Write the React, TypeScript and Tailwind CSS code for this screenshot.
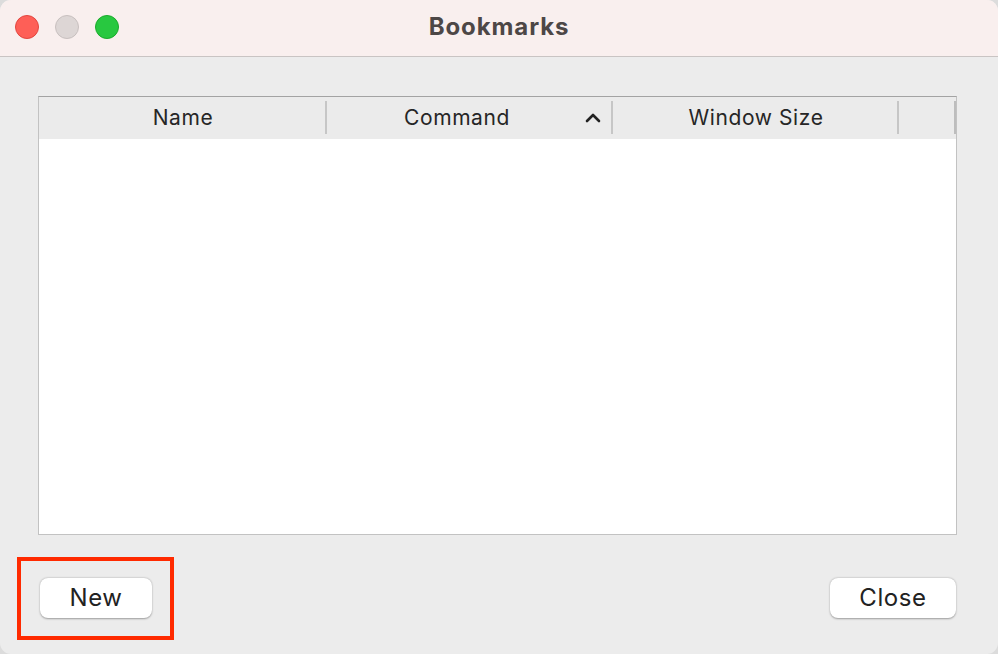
import { ChevronUp } from 'lucide-react';

const columns = [
  { label: 'Name', width: 'w-[288px]', sorted: false },
  { label: 'Command', width: 'w-[286px]', sorted: true },
  { label: 'Window Size', width: 'w-[286px]', sorted: false },
];

function Button({ label, className }: { label: string; className: string }) {
  return (
    <button
      className={`h-[40px] rounded-[8px] bg-white text-[24px] tracking-[0.6px] text-[#222] shadow-[0_0.5px_2px_rgba(0,0,0,0.35)] ${className}`}
    >
      {label}
    </button>
  );
}

export default function App() {
  return (
    <div className="w-[998px] h-[654px] bg-[#dcdcdc] font-['Inter','Liberation_Sans',sans-serif]">
      <div className="w-full h-full rounded-[11px] overflow-hidden flex flex-col bg-[#ececec]">
        {/* title bar */}
        <div className="relative h-[57px] shrink-0 bg-[#f9efee] border-b border-[#c9c4c3] flex items-center justify-center">
          <div className="absolute left-[15px] top-[15px] flex gap-[16px]">
            <span className="w-[24px] h-[24px] rounded-full bg-[#fe5f57] border border-[#e2463f]" />
            <span className="w-[24px] h-[24px] rounded-full bg-[#ddd6d5] border border-[#c8c0bf]" />
            <span className="w-[24px] h-[24px] rounded-full bg-[#28c840] border border-[#1aab2b]" />
          </div>
          <h1 className="-mt-[2px] text-[24px] font-bold text-[#4d4746] tracking-[0.9px]">Bookmarks</h1>
        </div>

        {/* body */}
        <div className="flex-1 flex flex-col pl-[38px] pr-[41px] pt-[39px]">
          <div className="h-[439px] flex flex-col border border-[#c2c2c2] border-t-[#a3a3a3] bg-white">
            <div className="h-[42px] shrink-0 flex bg-[#ebebeb]">
              {columns.map((c) => (
                <div
                  key={c.label}
                  className={`${c.width} relative flex items-center justify-center ${c.sorted ? 'pr-[26px]' : ''}`}
                >
                  <span className="text-[21px] tracking-[0.6px] text-[#262626]">{c.label}</span>
                  {c.sorted && (
                    <ChevronUp
                      className="absolute right-[8px] top-[9px] w-[24px] h-[24px] text-[#222]"
                      strokeWidth={2.6}
                    />
                  )}
                  <span className="absolute right-0 top-[4px] w-[2px] h-[33px] bg-[#c6c6c6]" />
                </div>
              ))}
              <div className="flex-1 relative">
                <span className="absolute right-0 top-[4px] w-[2px] h-[33px] bg-[#bdbdbd]" />
              </div>
            </div>
            <div className="flex-1 bg-white" />
          </div>

          <div className="flex items-start justify-between mt-[43px] pl-[2px] pr-[1px]">
            <div className="relative">
              <Button label="New" className="w-[112px]" />
              <span className="absolute -left-[23px] -top-[21px] w-[157px] h-[83px] border-[4px] border-[#ff2a00] pointer-events-none" />
            </div>
            <Button label="Close" className="w-[126px]" />
          </div>
        </div>
      </div>
    </div>
  );
}
